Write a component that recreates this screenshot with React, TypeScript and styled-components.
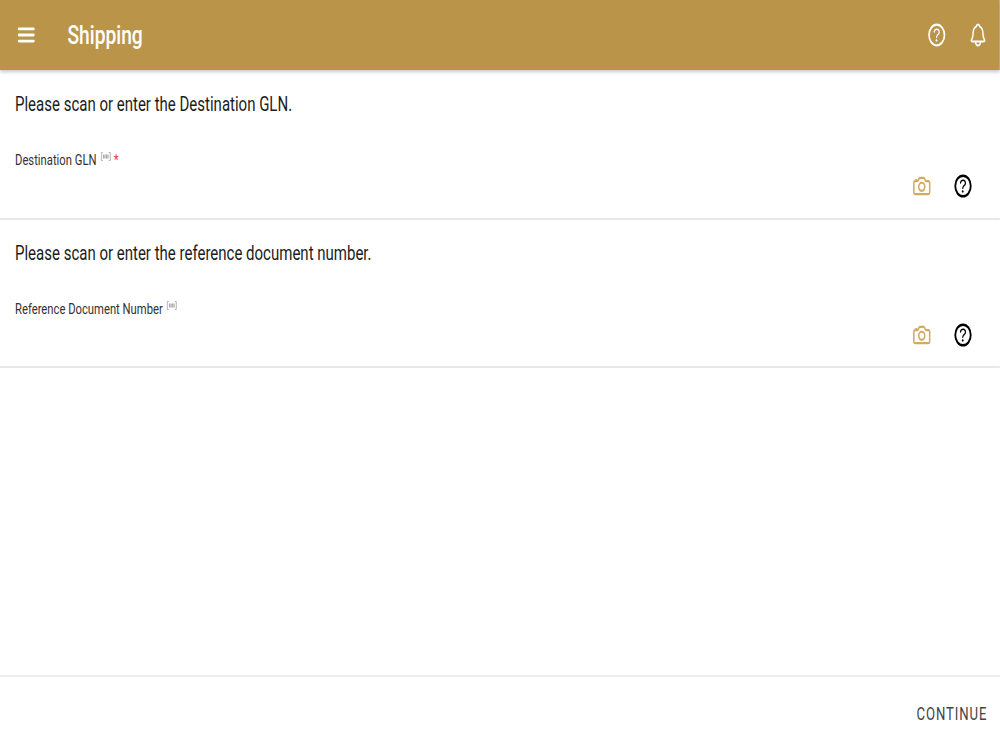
import React from "react";
import styled, { createGlobalStyle } from "styled-components";
import {
  IoCameraOutline,
  IoHelpCircleOutline,
  IoMenu,
  IoNotificationsOutline,
} from "react-icons/io5";

const GlobalStyle = createGlobalStyle`
  html, body {
    margin: 0;
    padding: 0;
    overflow: hidden;
    background: #fff;
    font-family: Roboto, "Liberation Sans", sans-serif;
  }
`;

// the whole screen is squeezed horizontally in the reference
const Screen = styled.div`
  width: 1333.33px;
  height: 750px;
  display: flex;
  flex-direction: column;
  transform: scaleX(0.75);
  transform-origin: left top;
`;

const Header = styled.header`
  height: 70px;
  flex: none;
  margin-bottom: 1px;
  display: flex;
  align-items: center;
  padding: 0 16px 0 20px;
  background: #ba9549;
  color: #fff;
  box-shadow: 0 2px 4px rgba(0, 0, 0, 0.22);
  position: relative;
`;

const MenuButton = styled.div`
  width: 30px;
  height: 30px;
  font-size: 30px;
  display: flex;
  margin-right: 40px;
`;

const Title = styled.h1`
  flex: 1;
  margin: 0;
  font-size: 25.6px;
  font-weight: 500;
`;

const HeaderIcon = styled.div<{ $size: number }>`
  display: flex;
  font-size: ${({ $size }) => $size}px;
  margin-left: 27px;

  svg path:first-child {
    stroke-width: 38px;
  }
`;

const Section = styled.section`
  height: 148.5px;
  box-sizing: border-box;
  flex: none;
  padding: 21px 20px 0;
  border-bottom: 2px solid #e8e8e8;
  display: flex;
  flex-direction: column;
`;

const Prompt = styled.div`
  font-size: 20px;
  line-height: 24px;
  color: #1c1c1c;
`;

const Label = styled.div`
  margin-top: 35px;
  font-size: 15px;
  line-height: 18px;
  color: #333;
  display: flex;
  align-items: flex-start;
`;

const ScanMark = styled.svg`
  width: 14px;
  height: 9px;
  margin: 1px 0 0 5px;
  color: #a8a8a8;
`;

const Required = styled.span`
  margin-left: 4px;
  color: #e8384f;
`;

const Actions = styled.div`
  display: flex;
  justify-content: flex-end;
  align-items: center;
  margin-top: 2px;
  padding-right: 14px;
`;

const CameraIcon = styled.div`
  display: flex;
  font-size: 26px;
  color: #d2ab63;
  margin-right: 27px;

  svg * {
    stroke-width: 40px;
  }
`;

const HelpIcon = styled.div`
  display: flex;
  font-size: 30px;
  color: #000;

  svg path:first-child {
    stroke-width: 42px;
  }
`;

const Spacer = styled.div`
  flex: 1;
`;

const Footer = styled.footer`
  height: 75px;
  flex: none;
  box-sizing: border-box;
  border-top: 2px solid #ececec;
  display: flex;
  align-items: center;
  justify-content: flex-end;
  padding-right: 17px;
`;

const ContinueButton = styled.button`
  border: 0;
  background: none;
  padding: 0;
  font: 400 17.500px Roboto, "Liberation Sans", sans-serif;
  letter-spacing: 1.200px;
  color: #444;
`;

const Field: React.FC<{ prompt: string; label: string; required?: boolean }> = ({
  prompt,
  label,
  required,
}) => (
  <Section>
    <Prompt>{prompt}</Prompt>
    <Label>
      {label}
      <ScanMark viewBox="0 0 14 9" fill="none" stroke="currentColor">
        <path d="M3 .5H1V8.500H3M11 .5h2V8.500h-2" />
        <path d="M4 2.500v4M6 2.500v4M8 2.500v4M10 2.500v4" strokeWidth="1.500" />
      </ScanMark>
      {required && <Required>*</Required>}
    </Label>
    <Actions>
      <CameraIcon>
        <IoCameraOutline />
      </CameraIcon>
      <HelpIcon>
        <IoHelpCircleOutline />
      </HelpIcon>
    </Actions>
  </Section>
);

export default function App() {
  return (
    <>
      <GlobalStyle />
      <Screen>
        <Header>
          <MenuButton>
            <IoMenu />
          </MenuButton>
          <Title>Shipping</Title>
          <HeaderIcon $size={30}>
            <IoHelpCircleOutline />
          </HeaderIcon>
          <HeaderIcon $size={26}>
            <IoNotificationsOutline />
          </HeaderIcon>
        </Header>
        <Field
          prompt="Please scan or enter the Destination GLN."
          label="Destination GLN"
          required
        />
        <Field
          prompt="Please scan or enter the reference document number."
          label="Reference Document Number"
        />
        <Spacer />
        <Footer>
          <ContinueButton>CONTINUE</ContinueButton>
        </Footer>
      </Screen>
    </>
  );
}
